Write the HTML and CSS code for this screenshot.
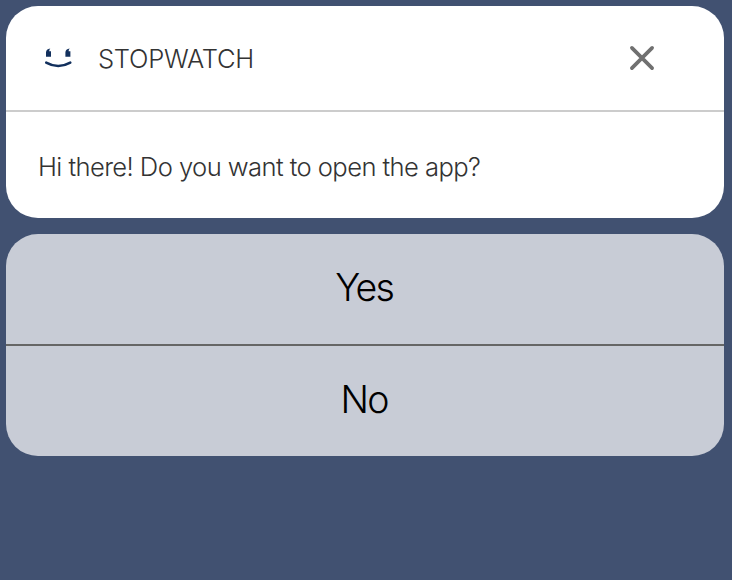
FILE: index.html
```html
<!DOCTYPE html>
<html lang="en">
<head>
<meta charset="utf-8">
<title>Stopwatch</title>
<link rel="stylesheet" href="styles.css">
</head>
<body>
<main class="prompt">
  <section class="card">
    <header class="card-header">
      <svg class="logo" width="32" height="28" viewBox="0 0 32 28" aria-hidden="true">
        <path d="M6.3 4.5Q5.2 5.6 5.2 7.2H7V12.7H2V8.5Q2 5 6.3 4.5ZM25.7 4.5Q24.6 5.6 24.6 7.2H26.4V12.7H21.4V8.5Q21.4 5 25.7 4.5Z"/>
        <path class="smile" d="M2.2 18.6Q14.2 25.4 26.3 18.6"/>
      </svg>
      <h1 class="title"><span>STOPWATCH</span></h1>
      <button class="close" aria-label="Close">
        <svg width="26" height="26" viewBox="0 0 26 26"><path d="M2.9 2.9L23.1 23.1M23.1 2.9L2.9 23.1"/></svg>
      </button>
    </header>
    <p class="message"><span>Hi there! Do you want to open the app?</span></p>
  </section>
  <section class="options">
    <button class="option yes"><span>Yes</span></button>
    <button class="option no"><span>No</span></button>
  </section>
</main>
</body>
</html>
```
FILE: styles.css
```css
* { box-sizing: border-box; }
body {
  margin: 0;
  min-height: 580px;
  background: #415171;
  font-family: Inter, "Liberation Sans", sans-serif;
  font-weight: 300;
}
.prompt {
  display: flex;
  flex-direction: column;
  gap: 16px;
  padding: 6px 8px 6px 6px;
}
.card, .options {
  border-radius: 32px;
  overflow: hidden;
}
.card { height: 212px; background: #fff; }
.card-header {
  display: flex;
  align-items: center;
  height: 106px;
  padding: 0 69px 0 38px;
  border-bottom: 2px solid #ccc;
}
.logo { fill: #12305d; }
.smile { fill: none; stroke: #12305d; stroke-width: 2.5; stroke-linecap: round; }
.title {
  margin: 0 auto 0 22px;
  font-size: 25.6px;
  font-weight: 300;
  letter-spacing: -0.3px;
  color: #333;
}
.close { display: flex; padding: 0; border: 0; background: none; }
.close path { fill: none; stroke: #707070; stroke-width: 3.7; stroke-linecap: round; }
.message {
  display: flex;
  align-items: center;
  height: 106px;
  margin: 0;
  padding: 2px 32px 0;
  font-size: 25.6px;
  letter-spacing: -0.58px;
  color: #333;
}
.options { height: 222px; background: #c8ccd6; }
.option {
  display: flex;
  align-items: center;
  justify-content: center;
  width: 100%;
  height: 110px;
  padding: 0 0 4px;
  border: 0;
  background: none;
  font: 300 37.5px Inter, "Liberation Sans", sans-serif;
  letter-spacing: -1.8px;
  text-indent: -1.8px;
  color: #000;
}
.yes { height: 112px; border-bottom: 2px solid #666; }
```
